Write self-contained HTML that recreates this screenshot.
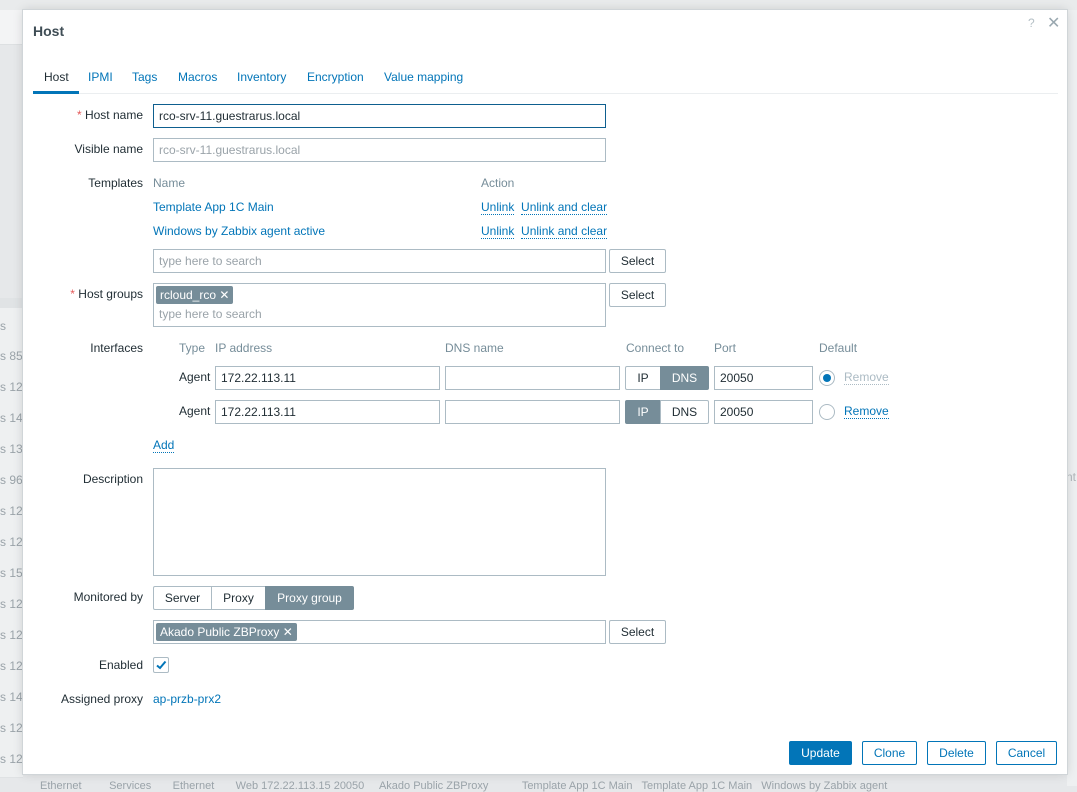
<!DOCTYPE html>
<html><head><meta charset="utf-8"><style>
*{box-sizing:border-box;margin:0;padding:0}
body{width:1077px;height:786px;overflow:hidden;background:#e6e8ea;font-family:"Liberation Sans",Arial,sans-serif;font-size:12px;color:#1f2c33;position:relative}
.a{position:absolute}
.bgrow{position:absolute;left:0;width:23px;height:37px;border-bottom:1px solid #dfe2e4;background:#eef0f1;color:#9aa3a9;font-size:12px;line-height:37px;white-space:nowrap;overflow:hidden}
.dlg{position:absolute;left:23px;top:10px;width:1044px;height:764px;background:#fff;box-shadow:0 0 0 1px #d0d5d8,0 0 10px rgba(0,0,0,.15)}
.inner{position:absolute;left:0;top:1px;width:1044px;height:763px}
.lbl{position:absolute;right:924px;text-align:right;white-space:nowrap;color:#1f2c33}
.req:before{content:"* ";color:#e45959}
.in{position:absolute;height:24px;border:1px solid #acbbc4;background:#fff;padding:0 5px;line-height:22px;color:#1f2c33;white-space:nowrap}
.ph{color:#9aa3a9}
.link{color:#0275b8}
.dot{border-bottom:1px dotted #0275b8}
.btn{position:absolute;height:24px;border:1px solid #acbbc4;background:#fff;text-align:center;line-height:22px;border-radius:2px;color:#1f2c33}
.tag{position:absolute;height:18px;background:#768d99;color:#fff;border-radius:2px;padding:0 4px;line-height:18px;white-space:nowrap}
.hd{position:absolute;color:#768d99}
.bb{position:absolute;height:24px;border:1px solid #0275b8;color:#0275b8;background:#fff;border-radius:2px;text-align:center;line-height:22px}
</style></head><body>
<div class="a" style="left:0;top:0;width:1077px;height:10px;background:#e9ebec"></div>
<div class="a" style="left:0;top:10px;width:23px;height:35px;background:#f3f4f5;border-bottom:1px solid #dde0e2"></div>
<div class="a" style="left:0;top:298px;width:23px;height:10px;background:#e0e3e5"></div>
<div class="bgrow" style="top:308px">s</div>
<div class="bgrow" style="top:338px">s 85</div>
<div class="bgrow" style="top:369px">s 128</div>
<div class="bgrow" style="top:400px">s 141</div>
<div class="bgrow" style="top:431px">s 139</div>
<div class="bgrow" style="top:462px">s 96</div>
<div class="bgrow" style="top:493px">s 128</div>
<div class="bgrow" style="top:524px">s 128</div>
<div class="bgrow" style="top:555px">s 158</div>
<div class="bgrow" style="top:586px">s 126</div>
<div class="bgrow" style="top:617px">s 126</div>
<div class="bgrow" style="top:648px">s 128</div>
<div class="bgrow" style="top:679px">s 141</div>
<div class="bgrow" style="top:710px">s 128</div>
<div class="bgrow" style="top:741px">s 128</div>
<div class="a" style="left:1067px;top:10px;width:10px;height:776px;background:#eef0f1"></div>
<div class="a" style="left:1066px;top:470px;color:#b0b6ba">nt</div>
<div class="a" style="left:40px;top:780px;color:#9aa3a9;font-size:11px;white-space:nowrap">Ethernet &nbsp; &nbsp; &nbsp; &nbsp; Services &nbsp; &nbsp; &nbsp; Ethernet &nbsp; &nbsp; &nbsp; Web 172.22.113.15 20050 &nbsp; &nbsp; Akado Public ZBProxy &nbsp; &nbsp; &nbsp; &nbsp; &nbsp; Template App 1C Main &nbsp; Template App 1C Main &nbsp; Windows by Zabbix agent</div>

<div class="dlg"><div class="inner">
<div class="a" style="left:10px;top:12px;font-size:14px;font-weight:bold;color:#3f4d55">Host</div>
<div class="a" style="left:1005px;top:5px;color:#b5c0c6;font-size:12px">?</div>
<div class="a" style="left:1024px;top:2px;color:#9aa8b0;font-size:16px">✕</div>

<div class="a" style="left:10px;top:82px;width:1025px;height:1px;background:#ebeef0"></div>
<div class="a" style="left:10px;top:80px;width:46px;height:3px;background:#0275b8"></div>
<div class="a" style="left:21px;top:59px;white-space:nowrap"><span style="color:#1f2c33">Host</span></div>
<div class="a link" style="left:65px;top:59px">IPMI</div>
<div class="a link" style="left:109px;top:59px">Tags</div>
<div class="a link" style="left:155px;top:59px">Macros</div>
<div class="a link" style="left:214px;top:59px">Inventory</div>
<div class="a link" style="left:284px;top:59px">Encryption</div>
<div class="a link" style="left:361px;top:59px">Value mapping</div>

<div class="lbl req" style="top:97px">Host name</div>
<div class="in" style="left:130px;top:93px;width:453px;border-color:#0e5f8f">rco-srv-11.guestrarus.local</div>
<div class="lbl" style="top:131px">Visible name</div>
<div class="in ph" style="left:130px;top:127px;width:453px">rco-srv-11.guestrarus.local</div>

<div class="lbl" style="top:165px">Templates</div>
<div class="hd" style="left:130px;top:165px">Name</div>
<div class="hd" style="left:458px;top:165px">Action</div>
<div class="a link" style="left:130px;top:189px">Template App 1C Main</div>
<div class="a link" style="left:458px;top:189px"><span class="dot">Unlink</span>&nbsp; <span class="dot">Unlink and clear</span></div>
<div class="a link" style="left:130px;top:213px">Windows by Zabbix agent active</div>
<div class="a link" style="left:458px;top:213px"><span class="dot">Unlink</span>&nbsp; <span class="dot">Unlink and clear</span></div>
<div class="in ph" style="left:130px;top:238px;width:453px">type here to search</div>
<div class="btn" style="left:586px;top:238px;width:57px">Select</div>

<div class="lbl req" style="top:276px">Host groups</div>
<div class="in" style="left:130px;top:272px;width:453px;height:44px"></div>
<div class="tag" style="left:133px;top:275px">rcloud_rco ✕</div>
<div class="a ph" style="left:136px;top:296px">type here to search</div>
<div class="btn" style="left:586px;top:272px;width:57px">Select</div>

<div class="lbl" style="top:330px">Interfaces</div>
<div class="hd" style="left:156px;top:330px">Type</div>
<div class="hd" style="left:192px;top:330px">IP address</div>
<div class="hd" style="left:422px;top:330px">DNS name</div>
<div class="hd" style="left:603px;top:330px">Connect to</div>
<div class="hd" style="left:691px;top:330px">Port</div>
<div class="hd" style="left:796px;top:330px">Default</div>

<div class="a" style="left:156px;top:359px">Agent</div>
<div class="in" style="left:192px;top:355px;width:225px">172.22.113.11</div>
<div class="in" style="left:422px;top:355px;width:175px"></div>
<div class="btn" style="left:602px;top:355px;width:36px;border-radius:2px 0 0 2px">IP</div>
<div class="btn" style="left:637px;top:355px;width:49px;background:#768d99;border-color:#768d99;color:#fff;border-radius:0 2px 2px 0">DNS</div>
<div class="in" style="left:691px;top:355px;width:99px">20050</div>
<div class="a" style="left:796px;top:359px;width:16px;height:16px;border:1px solid #acbbc4;border-radius:50%"><div class="a" style="left:3px;top:3px;width:8px;height:8px;background:#0275b8;border-radius:50%"></div></div>
<div class="a" style="left:821px;top:359px;color:#acbbc4;border-bottom:1px dotted #acbbc4">Remove</div>

<div class="a" style="left:156px;top:393px">Agent</div>
<div class="in" style="left:192px;top:389px;width:225px">172.22.113.11</div>
<div class="in" style="left:422px;top:389px;width:175px"></div>
<div class="btn" style="left:602px;top:389px;width:36px;background:#768d99;border-color:#768d99;color:#fff;border-radius:2px 0 0 2px">IP</div>
<div class="btn" style="left:637px;top:389px;width:49px;border-radius:0 2px 2px 0">DNS</div>
<div class="in" style="left:691px;top:389px;width:99px">20050</div>
<div class="a" style="left:796px;top:393px;width:16px;height:16px;border:1px solid #acbbc4;border-radius:50%"></div>
<div class="a link dot" style="left:821px;top:393px">Remove</div>

<div class="a link dot" style="left:130px;top:427px">Add</div>

<div class="lbl" style="top:461px">Description</div>
<div class="in" style="left:130px;top:457px;width:453px;height:108px"></div>

<div class="lbl" style="top:579px">Monitored by</div>
<div class="btn" style="left:130px;top:575px;width:59px;border-radius:2px 0 0 2px">Server</div>
<div class="btn" style="left:188px;top:575px;width:55px;border-radius:0">Proxy</div>
<div class="btn" style="left:242px;top:575px;width:89px;background:#768d99;border-color:#768d99;color:#fff;border-radius:0 2px 2px 0">Proxy group</div>
<div class="in" style="left:130px;top:609px;width:453px"></div>
<div class="tag" style="left:133px;top:612px">Akado Public ZBProxy ✕</div>
<div class="btn" style="left:586px;top:609px;width:57px">Select</div>

<div class="lbl" style="top:647px">Enabled</div>
<div class="a" style="left:130px;top:646px;width:16px;height:16px;border:1px solid #acbbc4;border-radius:2px"><svg width="14" height="14" viewBox="0 0 14 14" style="position:absolute;left:0;top:0"><path d="M3 7.5 L6 10 L11.5 3.5" stroke="#0275b8" stroke-width="2" fill="none"/></svg></div>

<div class="lbl" style="top:681px">Assigned proxy</div>
<div class="a link" style="left:130px;top:681px">ap-przb-prx2</div>

<div class="btn" style="left:766px;top:730px;width:63px;background:#0275b8;border-color:#0275b8;color:#fff">Update</div>
<div class="bb" style="left:839px;top:730px;width:55px">Clone</div>
<div class="bb" style="left:904px;top:730px;width:59px">Delete</div>
<div class="bb" style="left:973px;top:730px;width:61px">Cancel</div>
</div></div>
</body></html>
